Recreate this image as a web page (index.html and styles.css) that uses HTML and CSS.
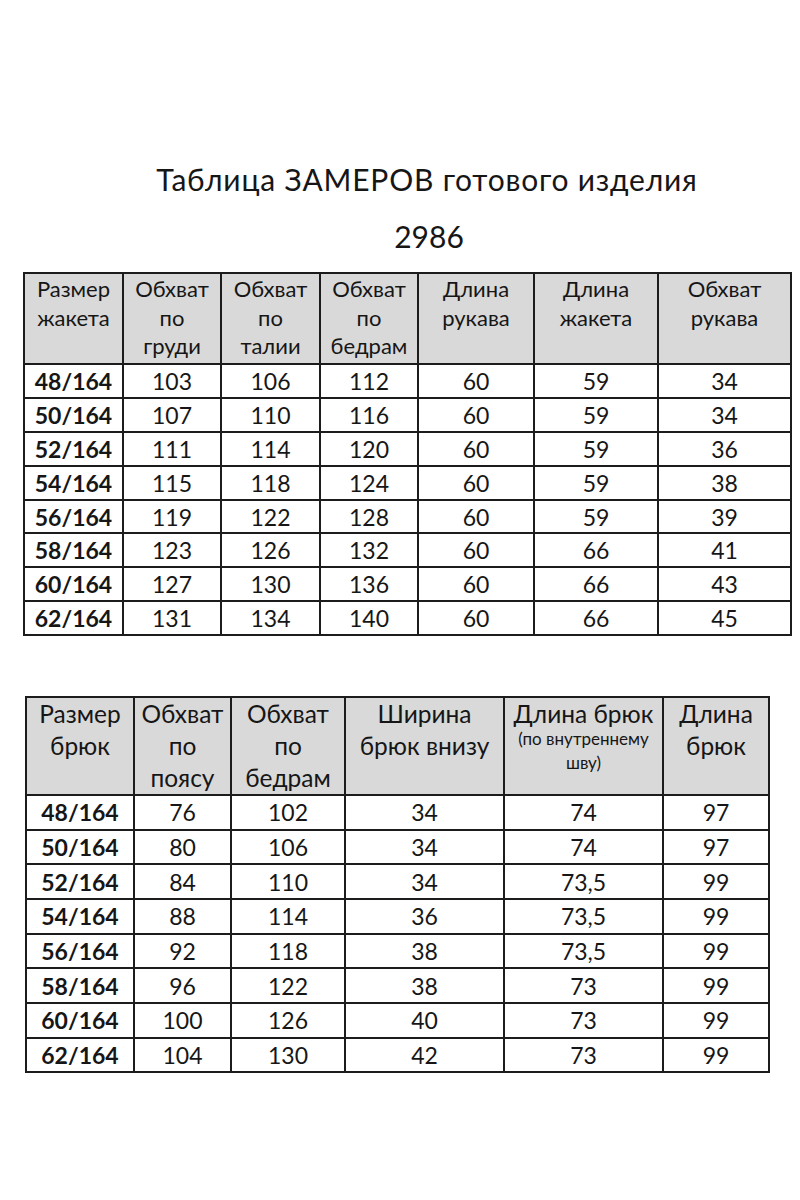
FILE: index.html
```html
<!DOCTYPE html>
<html lang="ru">
<head>
<meta charset="utf-8">
<title>Таблица ЗАМЕРОВ готового изделия 2986</title>
<link rel="stylesheet" href="styles.css">
</head>
<body>
<div class="page">
  <div class="title">Таблица ЗАМЕРОВ готового изделия</div>
  <div class="code">2986</div>

  <table class="sizes jacket">
    <colgroup>
      <col class="c99"><col class="c98"><col class="c99"><col class="c98"><col class="c116"><col class="c124"><col class="c133">
    </colgroup>
    <thead>
      <tr>
        <th>Размер<br>жакета</th>
        <th>Обхват<br>по<br>груди</th>
        <th>Обхват<br>по<br>талии</th>
        <th>Обхват<br>по<br>бедрам</th>
        <th>Длина<br>рукава</th>
        <th>Длина<br>жакета</th>
        <th>Обхват<br>рукава</th>
      </tr>
    </thead>
    <tbody>
      <tr><td class="size">48/164</td><td>103</td><td>106</td><td>112</td><td>60</td><td>59</td><td>34</td></tr>
      <tr><td class="size">50/164</td><td>107</td><td>110</td><td>116</td><td>60</td><td>59</td><td>34</td></tr>
      <tr><td class="size">52/164</td><td>111</td><td>114</td><td>120</td><td>60</td><td>59</td><td>36</td></tr>
      <tr><td class="size">54/164</td><td>115</td><td>118</td><td>124</td><td>60</td><td>59</td><td>38</td></tr>
      <tr><td class="size">56/164</td><td>119</td><td>122</td><td>128</td><td>60</td><td>59</td><td>39</td></tr>
      <tr><td class="size">58/164</td><td>123</td><td>126</td><td>132</td><td>60</td><td>66</td><td>41</td></tr>
      <tr><td class="size">60/164</td><td>127</td><td>130</td><td>136</td><td>60</td><td>66</td><td>43</td></tr>
      <tr><td class="size">62/164</td><td>131</td><td>134</td><td>140</td><td>60</td><td>66</td><td>45</td></tr>
    </tbody>
  </table>

  <table class="sizes trousers">
    <colgroup>
      <col class="c108"><col class="c97"><col class="c114"><col class="c159"><col class="c159"><col class="c106">
    </colgroup>
    <thead>
      <tr>
        <th>Размер<br>брюк</th>
        <th>Обхват<br>по<br>поясу</th>
        <th>Обхват<br>по<br>бедрам</th>
        <th>Ширина<br>брюк внизу</th>
        <th>Длина брюк<br><span class="note">(по внутреннему<br>шву)</span></th>
        <th>Длина<br>брюк</th>
      </tr>
    </thead>
    <tbody>
      <tr><td class="size">48/164</td><td>76</td><td>102</td><td>34</td><td>74</td><td>97</td></tr>
      <tr><td class="size">50/164</td><td>80</td><td>106</td><td>34</td><td>74</td><td>97</td></tr>
      <tr><td class="size">52/164</td><td>84</td><td>110</td><td>34</td><td>73,5</td><td>99</td></tr>
      <tr><td class="size">54/164</td><td>88</td><td>114</td><td>36</td><td>73,5</td><td>99</td></tr>
      <tr><td class="size">56/164</td><td>92</td><td>118</td><td>38</td><td>73,5</td><td>99</td></tr>
      <tr><td class="size">58/164</td><td>96</td><td>122</td><td>38</td><td>73</td><td>99</td></tr>
      <tr><td class="size">60/164</td><td>100</td><td>126</td><td>40</td><td>73</td><td>99</td></tr>
      <tr><td class="size">62/164</td><td>104</td><td>130</td><td>42</td><td>73</td><td>99</td></tr>
    </tbody>
  </table>
</div>
</body>
</html>
```

FILE: styles.css
```css
html, body {
  margin: 0;
  padding: 0;
  background: #ffffff;
}

.page {
  width: 800px;
  height: 1200px;
  padding-top: 161px;
  box-sizing: border-box;
  font-family: Lato, "Open Sans", "Noto Sans", sans-serif;
  color: #161616;
}

.title {
  font-size: 30px;
  line-height: 36px;
  letter-spacing: 0.8px;
  text-align: center;
  padding-left: 54px;
}

.code {
  margin-top: 21px;
  font-size: 30px;
  line-height: 36px;
  text-align: center;
  padding-left: 58px;
}

.sizes {
  border-collapse: collapse;
  table-layout: fixed;
}

.sizes th,
.sizes td {
  border: 2px solid #1c1c1c;
  padding: 0;
  text-align: center;
}

.sizes th {
  background: #d9d9d9;
  font-weight: normal;
  vertical-align: top;
}

.sizes td {
  font-size: 23px;
  line-height: 26px;
  vertical-align: middle;
}

.sizes td.size {
  font-weight: bold;
}

.jacket {
  width: 767px;
  margin-top: 18px;
  margin-left: 23px;
}

.jacket th {
  height: 88px;
  font-size: 22px;
  line-height: 28.7px;
  padding-top: 1px;
}

.jacket td {
  height: 31.9px;
}

.trousers {
  width: 743px;
  margin-top: 60px;
  margin-left: 25px;
}

.trousers th {
  height: 95px;
  font-size: 24.5px;
  line-height: 32px;
  padding-top: 0;
}

.trousers td {
  height: 32.65px;
}

.note {
  display: inline-block;
  font-size: 17px;
  line-height: 24px;
  margin-top: -3px;
}

.c97 { width: 97px; }
.c98 { width: 98px; }
.c99 { width: 99px; }
.c106 { width: 106px; }
.c108 { width: 108px; }
.c114 { width: 114px; }
.c116 { width: 116px; }
.c124 { width: 124px; }
.c133 { width: 133px; }
.c159 { width: 159px; }
```
